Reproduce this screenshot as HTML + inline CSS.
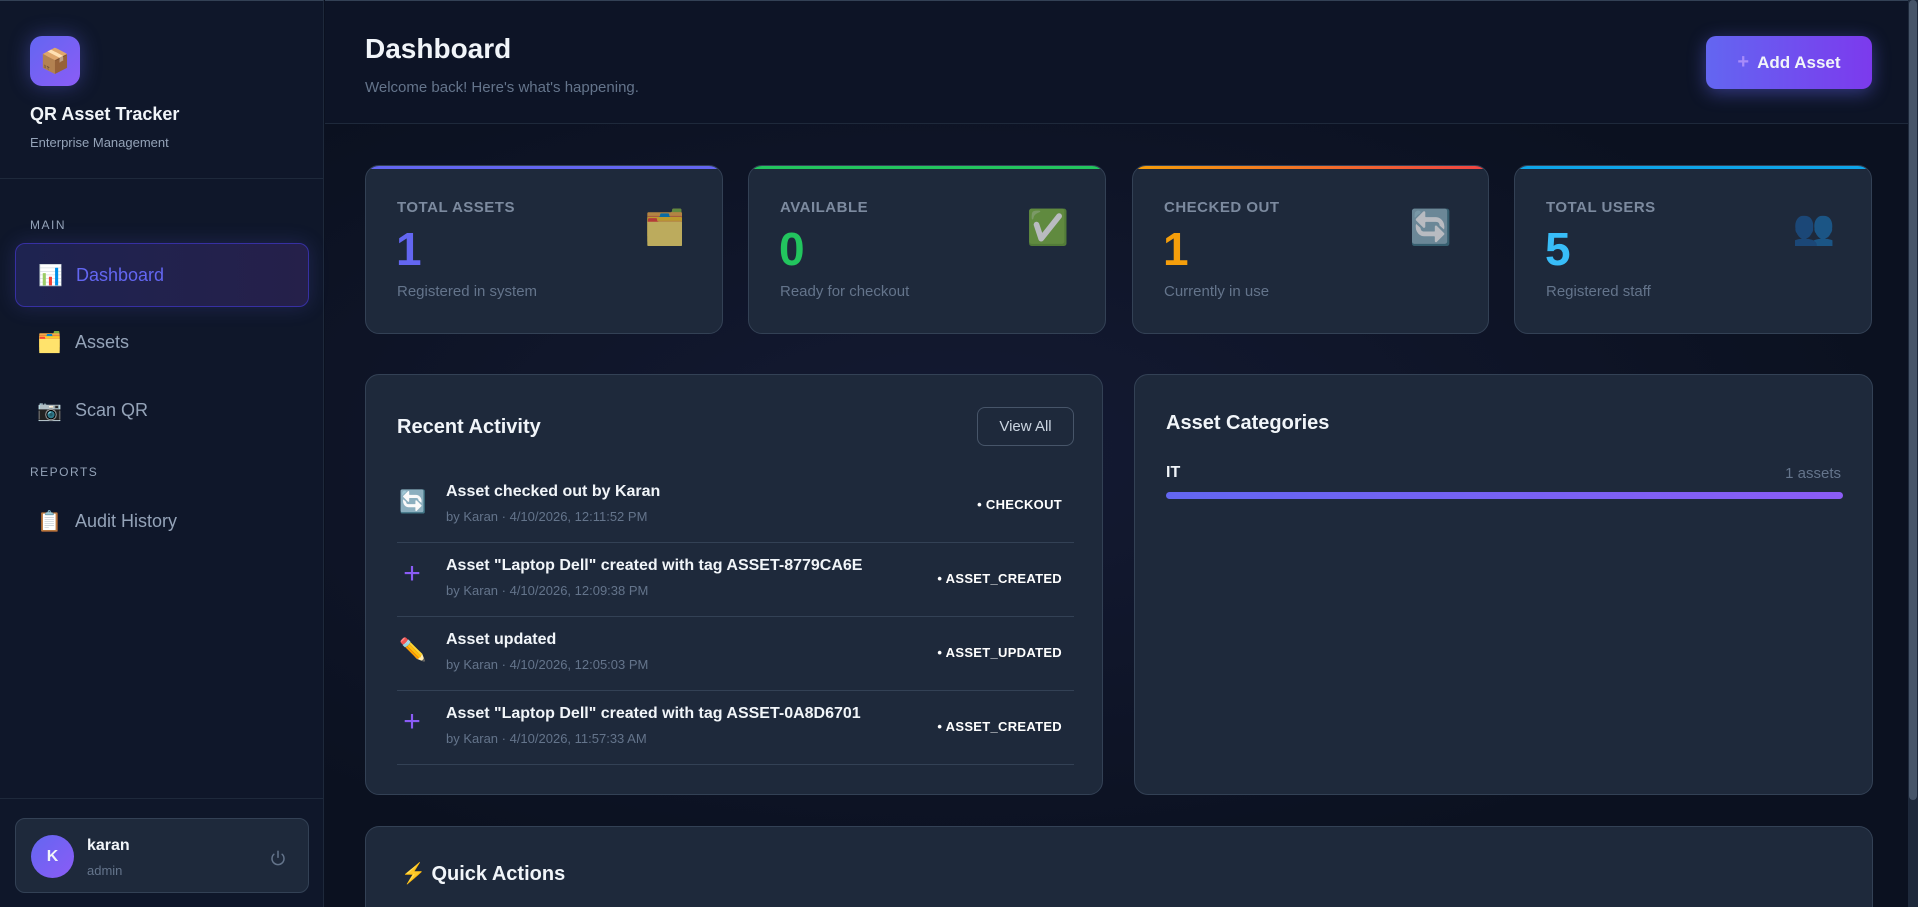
<!DOCTYPE html>
<html style="overflow:hidden;height:907px"><head><meta charset="utf-8"><style>
*{box-sizing:border-box;margin:0;padding:0}
body{width:1918px;height:907px;overflow:hidden;background:#0b1120;font-family:"Liberation Sans","Noto Sans CJK SC",sans-serif;color:#f1f5f9;position:relative}
.sb{position:absolute;left:0;top:0;width:324px;height:907px;background:#0f172a;border-right:1px solid #1e293b;border-top:1px solid #334155}
.logo{position:absolute;left:30px;top:35px;width:50px;height:50px;border-radius:12px;background:linear-gradient(135deg,#6366f1,#8b5cf6);box-shadow:0 0 20px rgba(99,102,241,.4);display:flex;align-items:center;justify-content:center;font-size:24px}
.abs{position:absolute}
.nav{position:absolute;left:15px;width:294px;height:64px;display:flex;align-items:center;padding-left:22px;font-size:18px;color:#94a3b8}
.nav .ic{width:24px;margin-right:14px;font-size:20px}
.main{position:absolute;left:325px;top:0;right:10px;height:907px;background:radial-gradient(ellipse at 40% 50%,#141a33 0%,#0b1120 70%)}
.hdr{position:absolute;left:325px;top:0;right:10px;height:124px;border-bottom:1px solid #1e293b;border-top:1px solid #334155;background:#0d1426}
.card{position:absolute;background:#1e293b;border:1px solid #334155;border-radius:14px;overflow:hidden}
.card .bar{position:absolute;left:0;right:0;top:0;height:3px}
.lbl{position:absolute;left:31px;top:33px;font-size:15px;color:#94a3b8;letter-spacing:.5px;font-weight:bold;opacity:.8}
.num{position:absolute;left:30px;top:56px;font-size:46px;font-weight:bold}
.sub{position:absolute;left:31px;top:117px;font-size:15px;color:#64748b}
.cic{position:absolute;right:36px;top:42px;font-size:34px;opacity:.7}
.row{position:absolute;left:31px;width:677px;height:74px;border-bottom:1px solid #334155}
.row .t{position:absolute;left:49px;top:14px;font-size:16px;font-weight:bold;color:#f1f5f9}
.row .s{position:absolute;left:49px;top:40px;font-size:13px;color:#64748b}
.row .i{position:absolute;left:2px;top:20px;font-size:22px;width:26px;text-align:center}
.row .b{position:absolute;right:12px;top:28px;font-size:13px;font-weight:bold;color:#fff;letter-spacing:.3px}
.sbar{position:absolute;right:0;top:0;width:10px;height:907px;background:#1e293b}
.sbar div{position:absolute;left:1px;top:0;width:8px;height:800px;background:#475569;border-radius:4px}
</style></head><body>
<div class="main"></div>
<div class="hdr">
 <div class="abs" style="left:40px;top:32px;font-size:28px;font-weight:bold">Dashboard</div>
 <div class="abs" style="left:40px;top:78px;font-size:15px;color:#64748b">Welcome back! Here's what's happening.</div>
 <div class="abs" style="left:1381px;top:35px;width:166px;height:53px;border-radius:10px;background:linear-gradient(90deg,#6366f1,#7c3aed);box-shadow:0 4px 18px rgba(99,102,241,.45);display:flex;align-items:center;justify-content:center;font-size:17px;font-weight:bold"><span style="color:#a78bfa;margin-right:8px;font-size:20px">+</span>Add Asset</div>
</div>
<div class="sb">
 <div class="logo">📦</div>
 <div class="abs" style="left:30px;top:103px;font-size:18px;font-weight:bold">QR Asset Tracker</div>
 <div class="abs" style="left:30px;top:134px;font-size:13px;color:#94a3b8">Enterprise Management</div>
 <div class="abs" style="left:0;top:177px;width:323px;height:1px;background:#1e293b"></div>
 <div class="abs" style="left:30px;top:217px;font-size:12px;color:#94a3b8;letter-spacing:1.5px">MAIN</div>
 <div class="nav" style="top:242px;background:linear-gradient(90deg,#1e2350,#25204a);border:1px solid #3730a3;border-radius:10px;color:#6366f1;box-shadow:0 0 20px rgba(99,102,241,.2)"><span class="ic">📊</span>Dashboard</div>
 <div class="nav" style="top:309px"><span class="ic">🗂️</span>Assets</div>
 <div class="nav" style="top:377px"><span class="ic">📷</span>Scan QR</div>
 <div class="abs" style="left:30px;top:464px;font-size:12px;color:#94a3b8;letter-spacing:1.5px">REPORTS</div>
 <div class="nav" style="top:488px"><span class="ic">📋</span>Audit History</div>
 <div class="abs" style="left:0;top:797px;width:323px;height:1px;background:#1e293b"></div>
 <div class="abs" style="left:15px;top:817px;width:294px;height:75px;background:#1e293b;border:1px solid #334155;border-radius:10px">
  <div class="abs" style="left:15px;top:16px;width:43px;height:43px;border-radius:50%;background:linear-gradient(135deg,#6366f1,#8b5cf6);display:flex;align-items:center;justify-content:center;font-weight:bold;font-size:16px">K</div>
  <div class="abs" style="left:71px;top:18px;font-size:16px;font-weight:bold">karan</div>
  <div class="abs" style="left:71px;top:44px;font-size:13px;color:#64748b">admin</div>
  <svg class="abs" style="left:253px;top:30px" width="18" height="18" viewBox="0 0 24 24" fill="none" stroke="#64748b" stroke-width="2" stroke-linecap="round"><path d="M12 3v8"/><path d="M6.5 7a8 8 0 1 0 11 0"/></svg>
 </div>
</div>

<div class="card" style="left:365px;top:165px;width:358px;height:169px"><div class="bar" style="background:#6366f1"></div><div class="lbl">TOTAL ASSETS</div><div class="num" style="color:#6366f1">1</div><div class="sub">Registered in system</div><div class="cic">🗂️</div></div>
<div class="card" style="left:748px;top:165px;width:358px;height:169px"><div class="bar" style="background:#22c55e"></div><div class="lbl">AVAILABLE</div><div class="num" style="color:#22c55e">0</div><div class="sub">Ready for checkout</div><div class="cic">✅</div></div>
<div class="card" style="left:1132px;top:165px;width:357px;height:169px"><div class="bar" style="background:linear-gradient(90deg,#f59e0b,#ef4444)"></div><div class="lbl">CHECKED OUT</div><div class="num" style="color:#f59e0b">1</div><div class="sub">Currently in use</div><div class="cic">🔄</div></div>
<div class="card" style="left:1514px;top:165px;width:358px;height:169px"><div class="bar" style="background:#0ea5e9"></div><div class="lbl">TOTAL USERS</div><div class="num" style="color:#38bdf8">5</div><div class="sub">Registered staff</div><div class="cic" style="opacity:.4">👥</div></div>

<div class="card" style="left:365px;top:374px;width:738px;height:421px">
 <div class="abs" style="left:31px;top:41px;font-size:20px;font-weight:bold">Recent Activity</div>
 <div class="abs" style="left:611px;top:32px;width:97px;height:39px;border:1px solid #475569;border-radius:8px;display:flex;align-items:center;justify-content:center;font-size:15px;color:#cbd5e1">View All</div>
 <div class="row" style="top:94px"><div class="i">🔄</div><div class="t">Asset checked out by Karan</div><div class="s">by Karan · 4/10/2026, 12:11:52 PM</div><div class="b">• CHECKOUT</div></div>
 <div class="row" style="top:168px"><div class="i" style="color:#8b5cf6;font-size:30px;top:14px">+</div><div class="t">Asset "Laptop Dell" created with tag ASSET-8779CA6E</div><div class="s">by Karan · 4/10/2026, 12:09:38 PM</div><div class="b">• ASSET_CREATED</div></div>
 <div class="row" style="top:242px"><div class="i">✏️</div><div class="t">Asset updated</div><div class="s">by Karan · 4/10/2026, 12:05:03 PM</div><div class="b">• ASSET_UPDATED</div></div>
 <div class="row" style="top:316px"><div class="i" style="color:#8b5cf6;font-size:30px;top:14px">+</div><div class="t">Asset "Laptop Dell" created with tag ASSET-0A8D6701</div><div class="s">by Karan · 4/10/2026, 11:57:33 AM</div><div class="b">• ASSET_CREATED</div></div>
</div>

<div class="card" style="left:1134px;top:374px;width:739px;height:421px">
 <div class="abs" style="left:31px;top:37px;font-size:20px;font-weight:bold">Asset Categories</div>
 <div class="abs" style="left:31px;top:89px;font-size:16px;font-weight:bold">IT</div>
 <div class="abs" style="right:31px;top:90px;font-size:15px;color:#64748b">1 assets</div>
 <div class="abs" style="left:31px;top:117px;width:677px;height:7px;border-radius:4px;background:linear-gradient(90deg,#6366f1,#8b5cf6)"></div>
</div>

<div class="card" style="left:365px;top:826px;width:1508px;height:81px;border-bottom:none;border-radius:14px 14px 0 0">
 <div class="abs" style="left:35px;top:34px;font-size:20px;font-weight:bold"><span style="color:#f97316">⚡</span> Quick Actions</div>
</div>
<div class="sbar"><div></div></div>
</body></html>
